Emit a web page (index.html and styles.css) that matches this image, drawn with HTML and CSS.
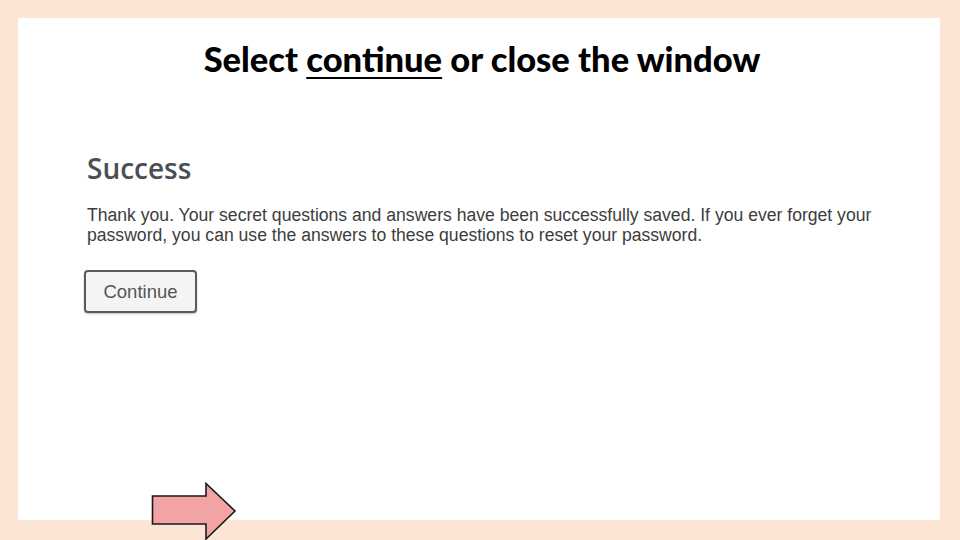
FILE: index.html
```html
<!DOCTYPE html>
<html>
<head>
<meta charset="utf-8">
<link rel="stylesheet" href="styles.css">
</head>
<body>
<div class="slide">
  <div class="panel">
    <h1 class="title">Select <u>continue</u> or close the window</h1>
    <div class="content">
      <h2 class="heading">Success</h2>
      <p class="message">Thank you. Your secret questions and answers have been successfully saved. If you ever forget your password, you can use the answers to these questions to reset your password.</p>
      <button class="btn">Continue</button>
    </div>
  </div>
  <svg class="arrow" width="90" height="62" viewBox="0 0 90 62">
    <polygon points="1.5,14 55,14 55,1.5 84,29 55,57 55,42 1.5,42" fill="#f2a3a3" stroke="#1a1a1a" stroke-width="1.6" stroke-linejoin="miter"/>
  </svg>
</div>
</body>
</html>
```
FILE: styles.css
```css
html, body {
  margin: 0;
  padding: 0;
}
body {
  width: 960px;
  height: 540px;
  overflow: hidden;
  background: #fde5d6;
}
.slide {
  position: relative;
  width: 960px;
  height: 540px;
  padding: 18px 20px 20px 18px;
  box-sizing: border-box;
}
.panel {
  background: #ffffff;
  height: 100%;
  box-sizing: border-box;
  padding: 19px 0 0 0;
}
.title {
  margin: 0;
  text-align: center;
  font-family: "Lato", sans-serif;
  font-weight: 900;
  font-size: 34.5px;
  line-height: 44px;
  color: #000;
  padding-left: 6px;
}
.title u {
  text-decoration-thickness: 2px;
  text-underline-offset: 5px;
}
.content {
  padding: 69px 0 0 69px;
}
.heading {
  margin: 0;
  font-family: "Open Sans", sans-serif;
  font-weight: 600;
  font-size: 28px;
  line-height: 36px;
  color: #4a4f56;
}
.message {
  margin: 19px 0 0 0;
  font-family: "Liberation Sans", Arial, sans-serif;
  font-size: 17.6px;
  line-height: 20px;
  color: #3d3d3d;
  width: 800px;
}
.btn {
  margin-top: 25px;
  margin-left: -3px;
  width: 113px;
  height: 43px;
  border: 2px solid #5a5a5a;
  border-radius: 4px;
  background: #f4f4f4;
  font-family: "Liberation Sans", Arial, sans-serif;
  font-size: 18.5px;
  color: #555;
  box-shadow: 0 1px 2px rgba(0,0,0,0.25);
  padding: 0;
}
.arrow {
  position: absolute;
  left: 151px;
  top: 482px;
}
```
